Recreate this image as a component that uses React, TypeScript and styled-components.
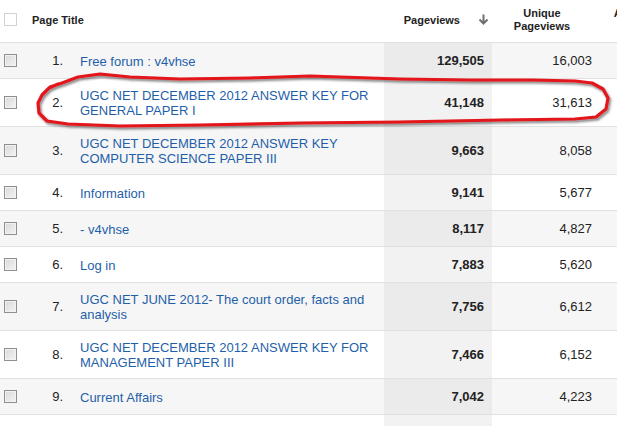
import React from "react";
import styled, { createGlobalStyle } from "styled-components";

const GlobalStyle = createGlobalStyle`
  html, body {
    margin: 0;
    padding: 0;
    overflow: hidden;
    background: #fff;
  }
  body {
    font-family: "Liberation Sans", Arial, sans-serif;
    color: #222;
  }
`;

const COLS = "24px 44px 316px 108px 108px 120px";

const Wrapper = styled.div`
  position: relative;
  width: 720px;
`;

const HeaderRow = styled.div`
  display: grid;
  grid-template-columns: ${COLS};
  height: 42px;
  border-bottom: 1px solid #e0e0e0;
  background: #fff;
  font-size: 11px;
  font-weight: bold;
  color: #222;
`;

const HeadCheckCell = styled.div`
  display: flex;
  align-items: center;
  padding: 0 0 3px 4px;
`;

const HeadTitle = styled.div`
  grid-column: span 2;
  display: flex;
  align-items: center;
  padding: 0 0 3px 8px;
`;

const PageviewsHead = styled.div`
  display: flex;
  align-items: center;
  justify-content: flex-end;
  padding: 0 3px 3px 0;
  gap: 18px;
`;

const UniqueHead = styled.div`
  display: flex;
  align-items: center;
  justify-content: center;
  text-align: center;
  line-height: 13px;
  padding: 0 8px 3px 0;
`;

const AvgHead = styled.div`
  display: flex;
  align-items: center;
  line-height: 13px;
  padding: 0 0 3px 13px;
`;

const AvgLabel = styled.span`
  width: 70px;
  text-align: center;
`;

const Checkbox = styled.span<{ $head?: boolean }>`
  display: inline-block;
  box-sizing: border-box;
  width: 13px;
  height: 13px;
  border: 1px solid ${(p) => (p.$head ? "#d2d2d2" : "#8f8f8f")};
  background: ${(p) =>
    p.$head ? "#fff" : "linear-gradient(135deg, #d9d9d9 0%, #f3f3f3 100%)"};
  box-shadow: ${(p) => (p.$head ? "none" : "inset 0 0 0 1px #f2f2f2")};
`;

const Row = styled.div<{ $alt: boolean }>`
  display: grid;
  grid-template-columns: ${COLS};
  min-height: 35px;
  border-bottom: 1px solid #e0e0e0;
  background: ${(p) => (p.$alt ? "#f6f6f6" : "#fff")};
  font-size: 13px;
`;

const CheckCell = styled.div`
  display: flex;
  align-items: center;
  padding-left: 4px;
`;

const NumCell = styled.div`
  display: flex;
  align-items: center;
  justify-content: flex-end;
  padding-right: 5px;
  color: #222;
`;

const TitleCell = styled.div`
  display: flex;
  align-items: center;
  padding: 9px 4px 8px 12px;
  line-height: 15px;
`;

const TitleLink = styled.a`
  color: #1f5fa9;
  text-decoration: none;
`;

const MetricCell = styled.div<{ $primary?: boolean; $alt: boolean }>`
  display: flex;
  align-items: center;
  justify-content: flex-end;
  padding-right: 8px;
  font-weight: ${(p) => (p.$primary ? "bold" : "normal")};
  background: ${(p) =>
    p.$primary ? (p.$alt ? "#ebebeb" : "#f2f2f2") : "transparent"};
`;

const Overlay = styled.svg`
  position: absolute;
  top: 0;
  left: 0;
  width: 617px;
  height: 426px;
  pointer-events: none;
  overflow: visible;
`;

const SortArrow = () => (
  <svg width="11" height="11" viewBox="0 0 11 11">
    <path
      d="M5.5 0.5 V9.5 M1.5 5.5 L5.5 9.5 L9.5 5.5"
      fill="none"
      stroke="#707070"
      strokeWidth="2"
    />
  </svg>
);

type Item = { n: string; title: string; pv: string; upv: string };

const rows: Item[] = [
  { n: "1.", title: "Free forum : v4vhse", pv: "129,505", upv: "16,003" },
  {
    n: "2.",
    title: "UGC NET DECEMBER 2012 ANSWER KEY FOR GENERAL PAPER I",
    pv: "41,148",
    upv: "31,613",
  },
  {
    n: "3.",
    title: "UGC NET DECEMBER 2012 ANSWER KEY COMPUTER SCIENCE PAPER III",
    pv: "9,663",
    upv: "8,058",
  },
  { n: "4.", title: "Information", pv: "9,141", upv: "5,677" },
  { n: "5.", title: "- v4vhse", pv: "8,117", upv: "4,827" },
  { n: "6.", title: "Log in", pv: "7,883", upv: "5,620" },
  {
    n: "7.",
    title: "UGC NET JUNE 2012- The court order, facts and analysis",
    pv: "7,756",
    upv: "6,612",
  },
  {
    n: "8.",
    title: "UGC NET DECEMBER 2012 ANSWER KEY FOR MANAGEMENT PAPER III",
    pv: "7,466",
    upv: "6,152",
  },
  { n: "9.", title: "Current Affairs", pv: "7,042", upv: "4,223" },
];

const circlePoints =
  "50,87 62,83 78,77 100,74 130,77 180,79 250,78 310,76 400,79 470,80 533,80 575,81 592,83 603,89 608,98 606,109 596,117 575,119 500,120 400,122 300,123 200,125 120,126 68,124 47,121 39,113 38,103 42,95 49,88 58,84";

export default function App() {
  return (
    <>
      <GlobalStyle />
      <Wrapper>
        <HeaderRow>
          <HeadCheckCell>
            <Checkbox $head />
          </HeadCheckCell>
          <HeadTitle>Page Title</HeadTitle>
          <PageviewsHead>
            <span>Pageviews</span>
            <SortArrow />
          </PageviewsHead>
          <UniqueHead>
            Unique
            <br />
            Pageviews
          </UniqueHead>
          <AvgHead>
            <AvgLabel>Avg. Time on Page</AvgLabel>
          </AvgHead>
        </HeaderRow>
        {rows.map((r, i) => {
          const alt = i % 2 === 0;
          return (
            <Row key={r.n} $alt={alt}>
              <CheckCell>
                <Checkbox />
              </CheckCell>
              <NumCell>{r.n}</NumCell>
              <TitleCell>
                <TitleLink href="#">{r.title}</TitleLink>
              </TitleCell>
              <MetricCell $primary $alt={alt}>
                {r.pv}
              </MetricCell>
              <MetricCell $alt={alt}>{r.upv}</MetricCell>
              <MetricCell $alt={alt} />
            </Row>
          );
        })}
        <Row $alt={false}>
          <CheckCell />
          <NumCell />
          <TitleCell />
          <MetricCell $primary $alt={false} />
          <MetricCell $alt={false} />
          <MetricCell $alt={false} />
        </Row>
        <Overlay viewBox="0 0 617 426">
          <defs>
            <filter id="shadow" x="-10%" y="-50%" width="120%" height="200%">
              <feDropShadow
                dx="1.5"
                dy="2"
                stdDeviation="1.3"
                floodColor="#222"
                floodOpacity="0.55"
              />
            </filter>
          </defs>
          <polyline
            points={circlePoints}
            fill="none"
            stroke="#e3141b"
            strokeWidth="3.2"
            strokeLinejoin="round"
            strokeLinecap="round"
            filter="url(#shadow)"
          />
        </Overlay>
      </Wrapper>
    </>
  );
}
